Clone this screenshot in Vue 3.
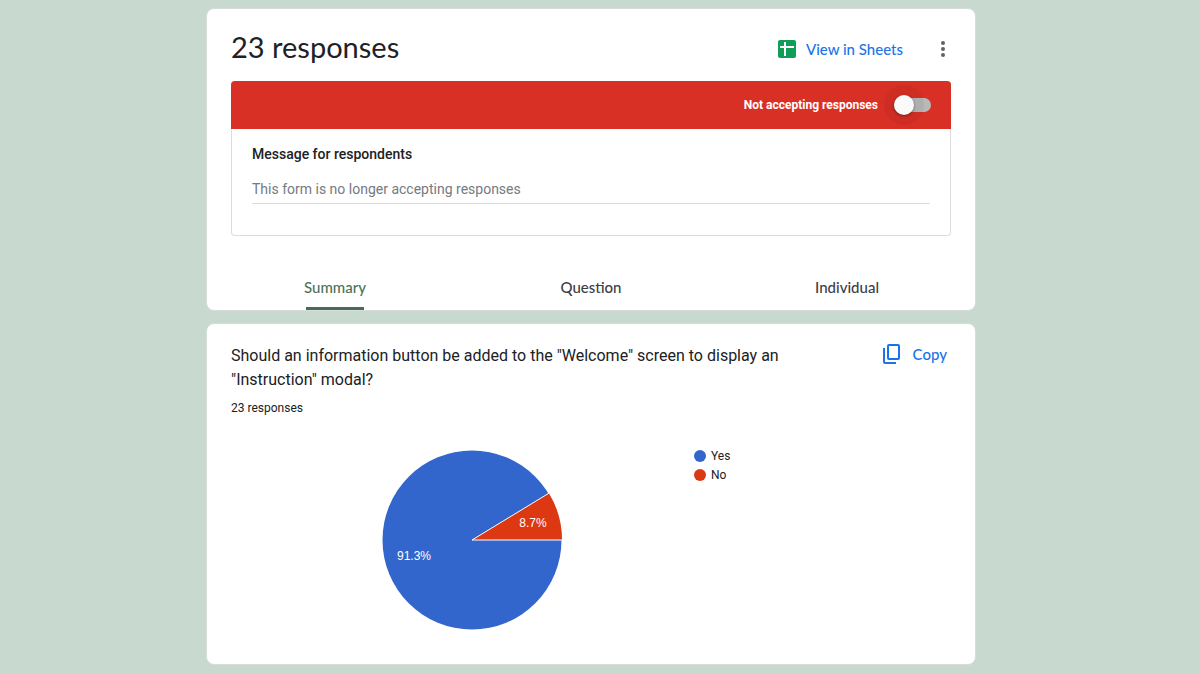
<script setup>
import { ref } from 'vue'

const accepting = ref(false)
const message = ref('')
const active = ref('Summary')
const tabs = ['Summary', 'Question', 'Individual']
const answers = [
  { label: 'Yes', color: '#3366cc' },
  { label: 'No', color: '#dc3912' }
]
</script>

<template>
  <main class="page">
    <section class="card">
      <header class="head">
        <h1>23 responses</h1>
        <a class="sheets" href="#">
          <svg width="18" height="18" viewBox="0 0 18 18" aria-hidden="true">
            <rect width="18" height="18" rx="2" fill="#0f9d58" />
            <path d="M7 2v14M2 7h14" stroke="#fff" stroke-width="2" fill="none" />
          </svg>
          View in Sheets
        </a>
        <button class="more" type="button" aria-label="More options">
          <svg width="24" height="24" viewBox="0 0 24 24" fill="#5f6368" aria-hidden="true">
            <circle cx="12" cy="6" r="2" /><circle cx="12" cy="12" r="2" /><circle cx="12" cy="18" r="2" />
          </svg>
        </button>
      </header>

      <div class="status">
        <label class="banner">
          <span>Not accepting responses</span>
          <input v-model="accepting" class="switch" type="checkbox" role="switch" />
        </label>
        <div class="message">
          <label for="message">Message for respondents</label>
          <input id="message" v-model="message" type="text" placeholder="This form is no longer accepting responses" />
        </div>
      </div>

      <nav class="tabs">
        <button
          v-for="tab in tabs"
          :key="tab"
          type="button"
          :class="{ active: tab === active }"
          @click="active = tab"
        ><span>{{ tab }}</span></button>
      </nav>
    </section>

    <section class="card question">
      <div class="top">
        <h2>Should an information button be added to the "Welcome" screen to display an "Instruction" modal?</h2>
        <button class="copy" type="button">
          <svg width="24" height="24" viewBox="0 0 24 24" aria-hidden="true">
            <rect x="8" y="3" width="11" height="14" rx="1" fill="none" stroke="#1a73e8" stroke-width="2" />
            <path d="M4 6v14a1 1 0 0 0 1 1h11" fill="none" stroke="#1a73e8" stroke-width="2" />
          </svg>
          Copy
        </button>
      </div>
      <p class="count">23 responses</p>
      <div class="chart">
        <svg class="pie" width="180" height="180" viewBox="0 0 180 180" role="img" aria-label="Yes 91.3%, No 8.7%">
          <circle cx="90" cy="90" r="89.5" fill="#3366cc" />
          <path d="M90 90L166.9 43.2A90 90 0 0 1 180 90Z" fill="#dc3912" />
          <path d="M166.9 43.2L90 90H180" fill="none" stroke="#fff" stroke-width="1" />
          <text x="32" y="110">91.3%</text>
          <text x="151" y="77">8.7%</text>
        </svg>
        <ul class="legend">
          <li v-for="a in answers" :key="a.label">
            <svg width="12" height="12" viewBox="0 0 12 12" aria-hidden="true"><circle cx="6" cy="6" r="6" :fill="a.color" /></svg>
            {{ a.label }}
          </li>
        </ul>
      </div>
    </section>
  </main>
</template>

<style>
body { background: #c8d9cf; }
</style>

<style scoped>
* { box-sizing: border-box; }
.page {
  max-width: 788px;
  margin: 0 auto;
  padding: 8px 18px 8px 0;
  font-family: Roboto, "Liberation Sans", sans-serif;
  color: #202124;
}
h1, h2, p, ul { margin: 0; padding: 0; font-weight: 400; }
button { border: 0; padding: 0; background: none; font: inherit; cursor: pointer; }
.card { background: #fff; border: 1px solid #d6dcd9; border-radius: 8px; margin-bottom: 12px; }
.head { display: flex; align-items: center; height: 72px; padding: 8px 20px 0 24px; }
h1 { flex: 1; padding-bottom: 4px; font: 400 29px/36px Lato, sans-serif; }
.sheets {
  display: flex; align-items: center; gap: 10px;
  color: #1a73e8; text-decoration: none;
  font: 500 15px/20px Lato, sans-serif;
}
.more { width: 24px; height: 24px; margin-left: 28px; }
svg { display: block; }
.status { margin: 0 24px; border: 1px solid #dadce0; border-top: 0; border-radius: 4px; }
.banner {
  display: flex; align-items: center; justify-content: flex-end; gap: 16px;
  height: 48px; margin: 0 -1px; padding-right: 20px;
  background: #d93025; color: #fff; border-radius: 4px 4px 0 0;
  font-size: 12px; font-weight: 700;
}
.switch {
  appearance: none; position: relative; width: 37px; height: 14px; margin: 0;
  border-radius: 7px; background: #b9b9b9;
}
.switch::before {
  content: ""; position: absolute; left: 0; top: -3px; width: 20px; height: 20px;
  border-radius: 50%; background: #fafafa;
  box-shadow: 0 1px 3px rgba(0, 0, 0, .4), 0 0 0 10px rgba(0, 0, 0, .05);
}
.switch:checked::before { left: 17px; }
.message { padding: 15px 20px 31px; font-size: 14px; }
.message label { display: block; line-height: 20px; font-weight: 500; }
.message input {
  display: block; width: 100%; height: 30px; margin-top: 10px; padding: 0;
  border: 0; border-bottom: 1px solid #dadce0; background: none; outline: 0;
  font: inherit; color: #202124;
}
.message input::placeholder { color: #757a7f; opacity: 1; }
.tabs { display: flex; margin-top: 28px; }
.tabs button {
  flex: 1; display: flex; justify-content: center; height: 46px;
  font: 500 15px/46px Lato, sans-serif; color: #3c4043;
}
.tabs span { padding: 0 2px; }
.tabs .active { color: #4a7358; }
.tabs .active span { background: linear-gradient(#466b56, #466b56) bottom / 58px 3px no-repeat; }
.question { padding: 18px 24px 34px; margin-bottom: 0; }
.top { display: flex; align-items: flex-start; justify-content: space-between; }
h2 { max-width: 592px; padding-top: 2px; font-size: 16px; line-height: 24px; }
.copy {
  display: flex; align-items: center; gap: 9px; height: 24px; padding-right: 4px;
  color: #1a73e8; font: 500 15px/20px Lato, sans-serif;
}
.count { margin-top: 8px; font-size: 12px; line-height: 16px; }
.chart { display: flex; align-items: flex-start; padding: 30px 0 0 151px; }
.pie { margin-top: 4px; }
.pie text { fill: #fff; font: 12px "Liberation Sans", Arial, sans-serif; text-anchor: middle; }
.legend { margin-left: 132px; list-style: none; font-size: 12px; }
.legend li { display: flex; align-items: center; gap: 5px; height: 19px; color: #222; }
</style>
